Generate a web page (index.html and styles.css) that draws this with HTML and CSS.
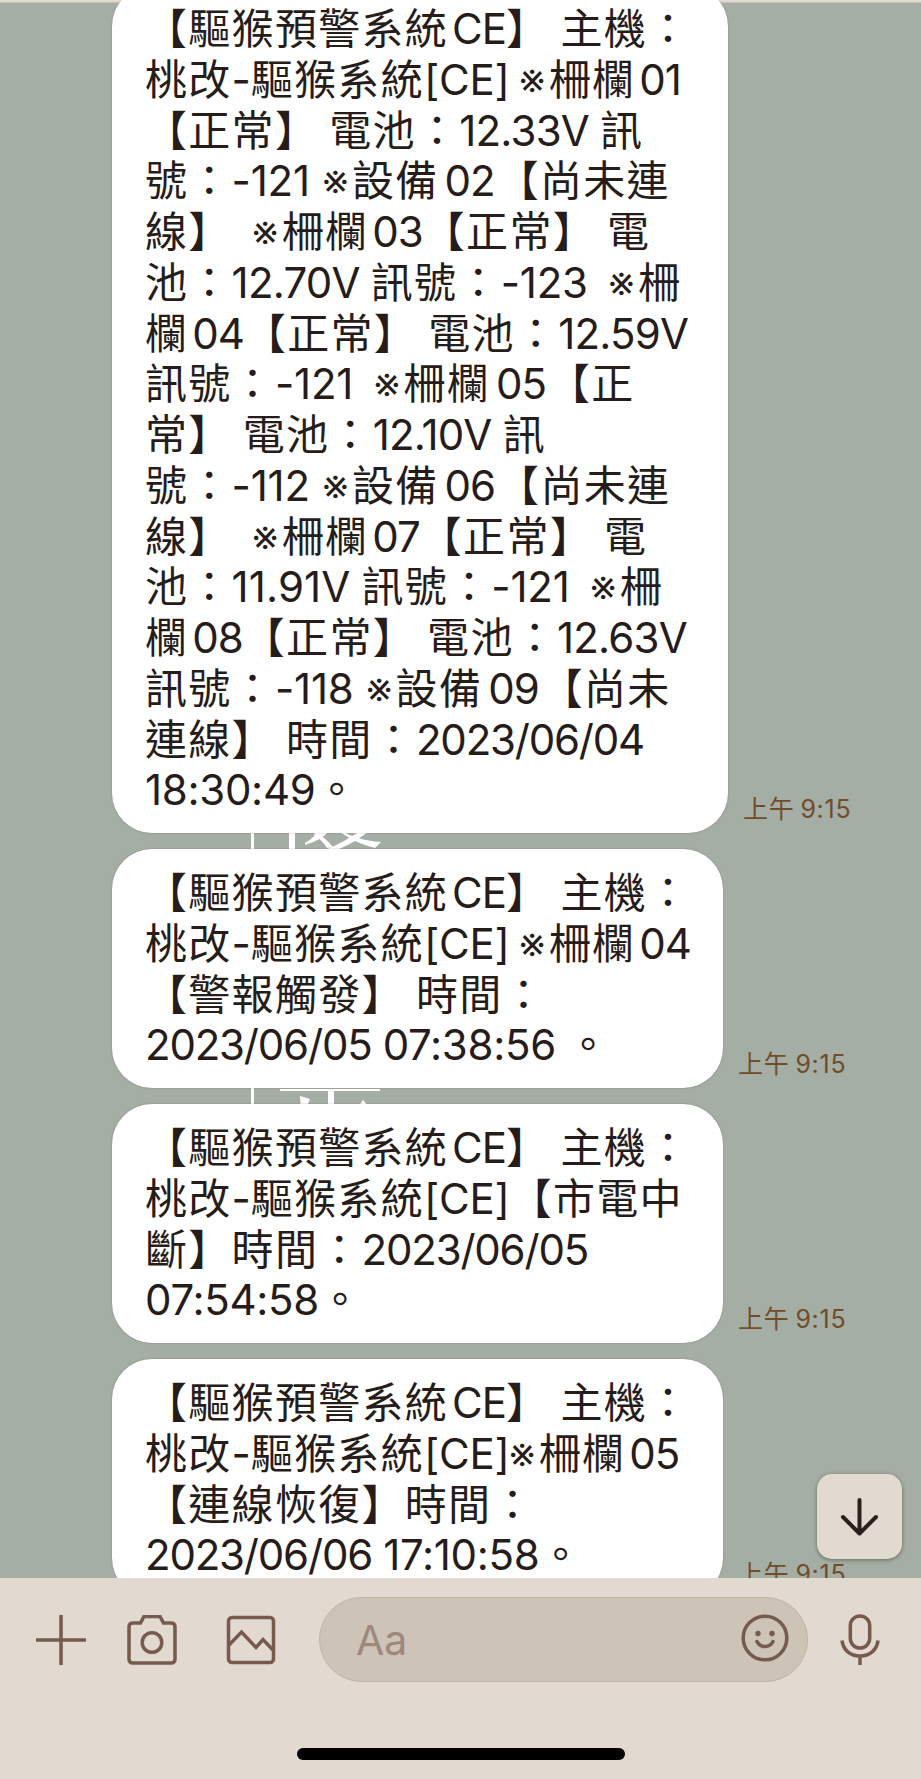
FILE: index.html
```html
<!DOCTYPE html>
<html lang="zh-Hant">
<head>
  <meta charset="UTF-8">
  <meta name="viewport" content="width=device-width, initial-scale=1.0">
  <title>驅猴預警系統</title>
  <link rel="stylesheet" href="styles.css">
</head>
<body>
  <main class="chat">
    <!-- Wallpaper strokes visible between the bubbles -->
    <svg class="wallpaper" viewBox="0 0 160 280" fill="#fff">
      <path d="M11 0h3v280h-3zM49 0h6v20h-6zM79 0h11q-8 10-25 15v-2q9-5 14-13zM121 0h9q-12 11-33 20h-12q20-8 36-20zM75 2q10 5 18 15l-6 1q-5-8-13-13zM101 0q14 10 40 12l-6 6q-20-5-35-16z"/>
      <path d="M40 259h100v2H40zM88 259h6v20h-6zM60 266l10 3-4 10h-5zM123 270l8 9h-14z"/>
    </svg>

    <div class="message">
      <div class="bubble wide">
        <span class="line">【驅猴預警系統<span class="en">CE</span>】 主機：</span>
        <span class="line">桃改<span class="sig">-</span>驅猴系統<span class="sig">[CE]</span><i>※</i>柵欄<span class="en">01</span></span>
        <span class="line">【正常】 電池：<span class="num">12.33V</span> 訊</span>
        <span class="line">號：<span class="sig">-121</span><i class="far">※</i>設備<span class="en id">02</span>【尚未連</span>
        <span class="line">線】 <i>※</i>柵欄<span class="en">03</span>【正常】 電</span>
        <span class="line">池：<span class="num">12.70V</span> 訊號：<span class="sig">-123</span> <i>※</i>柵</span>
        <span class="line">欄<span class="en">04</span>【正常】 電池：<span class="num">12.59V</span></span>
        <span class="line">訊號：<span class="sig">-121</span> <i>※</i>柵欄<span class="en id">05</span>【正</span>
        <span class="line">常】 電池：<span class="num">12.10V</span> 訊</span>
        <span class="line">號：<span class="sig">-112</span><i class="far">※</i>設備<span class="en id">06</span>【尚未連</span>
        <span class="line">線】 <i>※</i>柵欄<span class="en">07</span>【正常】 電</span>
        <span class="line">池：<span class="num ones">11.91V</span> 訊號：<span class="sig">-121</span> <i>※</i>柵</span>
        <span class="line">欄<span class="en">08</span>【正常】 電池：<span class="num">12.63V</span></span>
        <span class="line">訊號：<span class="sig">-118</span><i class="far">※</i>設備<span class="en id">09</span>【尚未</span>
        <span class="line">連線】 時間：<span class="date">2023/06/04</span></span>
        <span class="line"><span class="clock">18:30:49</span>。</span>
      </div>
      <span class="time">上午<span>9:15</span></span>
    </div>

    <div class="message">
      <div class="bubble">
        <span class="line">【驅猴預警系統<span class="en">CE</span>】 主機：</span>
        <span class="line">桃改<span class="sig">-</span>驅猴系統<span class="sig">[CE]</span><i>※</i>柵欄<span class="en">04</span></span>
        <span class="line">【警報觸發】 時間：</span>
        <span class="line"><span class="date">2023/06/05</span> <span class="clock">07:38:56</span> 。</span>
      </div>
      <span class="time">上午<span>9:15</span></span>
    </div>

    <div class="message">
      <div class="bubble">
        <span class="line">【驅猴預警系統<span class="en">CE</span>】 主機：</span>
        <span class="line">桃改<span class="sig">-</span>驅猴系統<span class="sig">[CE]</span>【市電中</span>
        <span class="line">斷】時間：<span class="date">2023/06/05</span></span>
        <span class="line"><span class="clock">07:54:58</span>。</span>
      </div>
      <span class="time">上午<span>9:15</span></span>
    </div>

    <div class="message">
      <div class="bubble">
        <span class="line">【驅猴預警系統<span class="en">CE</span>】 主機：</span>
        <span class="line">桃改<span class="sig">-</span>驅猴系統<span class="sig">[CE]</span><i class="close">※</i>柵欄<span class="en">05</span></span>
        <span class="line">【連線恢復】時間：</span>
        <span class="line"><span class="date">2023/06/06</span> <span class="clock">17:10:58</span>。</span>
      </div>
      <span class="time">上午<span>9:15</span></span>
    </div>

    <button class="scroll-down">
      <svg width="85" height="85" viewBox="0 0 85 85" fill="none" stroke="#2a1f1c" stroke-width="4" stroke-linecap="round" stroke-linejoin="round">
        <path d="M42.500 26v33M26 43l16.500 16.500L59 43"/>
      </svg>
    </button>
  </main>

  <footer>
    <div class="toolbar">
      <svg class="plus" width="50" height="50" viewBox="0 0 50 50"><path d="M0 25h50M25 0v50"/></svg>
      <svg class="camera" width="50" height="50" viewBox="0 0 50 50">
        <path d="M6 8h7.500l3.500-6.500h16L36.500 8H44q4 0 4 4v32q0 4-4 4H6q-4 0-4-4V12q0-4 4-4z"/>
        <circle cx="25" cy="27.500" r="9.800"/>
      </svg>
      <svg class="photo" width="50" height="50" viewBox="0 0 50 50">
        <rect x="2.500" y="2.500" width="45" height="45" rx="3.500"/>
        <path d="M3 30l12.500-13L30 32.500l7-8L47 35"/>
      </svg>
      <div class="input">
        <span>Aa</span>
        <svg width="48" height="48" viewBox="0 0 48 48">
          <circle cx="24" cy="24" r="21.800"/>
          <path d="M16 27.500q2.500 5 8 5t8-5" stroke-linecap="round"/>
          <circle class="eye" cx="17" cy="19.500" r="2.700"/>
          <circle class="eye" cx="31" cy="19.500" r="2.700"/>
        </svg>
      </div>
      <svg class="mic" width="40" height="52" viewBox="0 0 40 52">
        <rect x="10.300" y="2" width="19.400" height="32" rx="9.700"/>
        <path d="M2 26.500c1 9.500 8.500 15.500 18 15.500s17-6 18-15.500M20 42v9"/>
      </svg>
    </div>
    <div class="home-bar"></div>
  </footer>
</body>
</html>
```

FILE: styles.css
```css
* {
  margin: 0;
  padding: 0;
  box-sizing: border-box;
}

body {
  width: 921px;
  height: 1779px;
  overflow: hidden;
  display: flex;
  flex-direction: column;
  font-family: Inter, "Noto Sans CJK TC", sans-serif;
  color: #261c1a;
}

/* Chat area */
.chat {
  position: relative;
  height: 1578px;
  overflow: hidden;
  display: flex;
  flex-direction: column;
  gap: 16px;
  padding-left: 112px;
  background: linear-gradient(#e2d9d0 2px, #a5aea5 3px);
}

.wallpaper {
  position: absolute;
  left: 240px;
  top: 830px;
  width: 160px;
  height: 280px;
}

.message {
  position: relative;
  display: flex;
  align-items: flex-end;
  flex-shrink: 0;
}

.message:first-of-type {
  margin-top: -14px;
}

.bubble {
  width: 611px;
  height: 239px;
  padding: 19px 0 0 33px;
  background-color: #fff;
  border-radius: 40px;
  box-shadow: 0 0 2px rgba(0, 0, 0, 0.25);
}

.bubble.wide {
  width: 616px;
  height: 847px;
  padding-top: 18px;
}

.line {
  display: block;
  height: 50.75px;
  line-height: 50.75px;
  font-size: 42px;
  font-weight: 370;
  letter-spacing: 1.3px;
  word-spacing: -2px;
  white-space: pre;
  text-spacing-trim: space-all;
}

/* Latin runs are set a little tighter than the Chinese text */
.en {
  letter-spacing: -1px;
  margin-left: 4px;
}

.en.id {
  margin: 0 2px 0 6px;
}

.num {
  letter-spacing: -0.8px;
}

.num.ones {
  letter-spacing: 0.1px;
}

.date {
  letter-spacing: -1.2px;
}

.sig {
  letter-spacing: -0.2px;
}

.clock {
  letter-spacing: -0.3px;
}

.line i {
  display: inline-block;
  width: 31px;
  height: 50px;
  margin-left: 8px;
  vertical-align: top;
  font-size: 45px;
  font-style: normal;
  font-weight: 350;
  letter-spacing: 0;
  text-align: center;
  text-indent: -2px;
}

.line i.far {
  margin-left: 11px;
}

.line i.close {
  margin-left: -2px;
}

.time {
  margin: 0 0 7px 15px;
  font-size: 25px;
  line-height: 34px;
  letter-spacing: 0.7px;
  color: #6f4d2b;
}

.time span {
  margin-left: 6px;
}

.scroll-down {
  position: absolute;
  left: 817px;
  top: 1474px;
  width: 85px;
  height: 85px;
  border: none;
  border-radius: 15px;
  background-color: #e2d9d0;
  box-shadow: 0 1px 4px rgba(0, 0, 0, 0.4);
}

/* Bottom bar */
footer {
  height: 201px;
  background-color: #e2d9d0;
}

.toolbar {
  display: flex;
  align-items: center;
  height: 85px;
  margin-top: 19px;
  padding-left: 36px;
}

footer svg {
  fill: none;
  stroke: #765a4e;
  stroke-width: 3.5;
}

.camera {
  margin-left: 41px;
}

.photo {
  margin-left: 49px;
}

.input {
  display: flex;
  align-items: center;
  justify-content: space-between;
  width: 489px;
  height: 85px;
  margin-left: 43px;
  padding: 0 18px 0 36px;
  border: 1px solid #bfb2a6;
  border-radius: 43px;
  background-color: #cdc3b7;
  color: #9e887d;
  font-size: 41px;
}

.input svg {
  margin-bottom: 3px;
}

footer .eye {
  fill: #765a4e;
  stroke: none;
}

.mic {
  margin-left: 32px;
}

.home-bar {
  width: 328px;
  height: 12px;
  margin: 66px 0 0 297px;
  border-radius: 6px;
  background-color: #000;
}
```
